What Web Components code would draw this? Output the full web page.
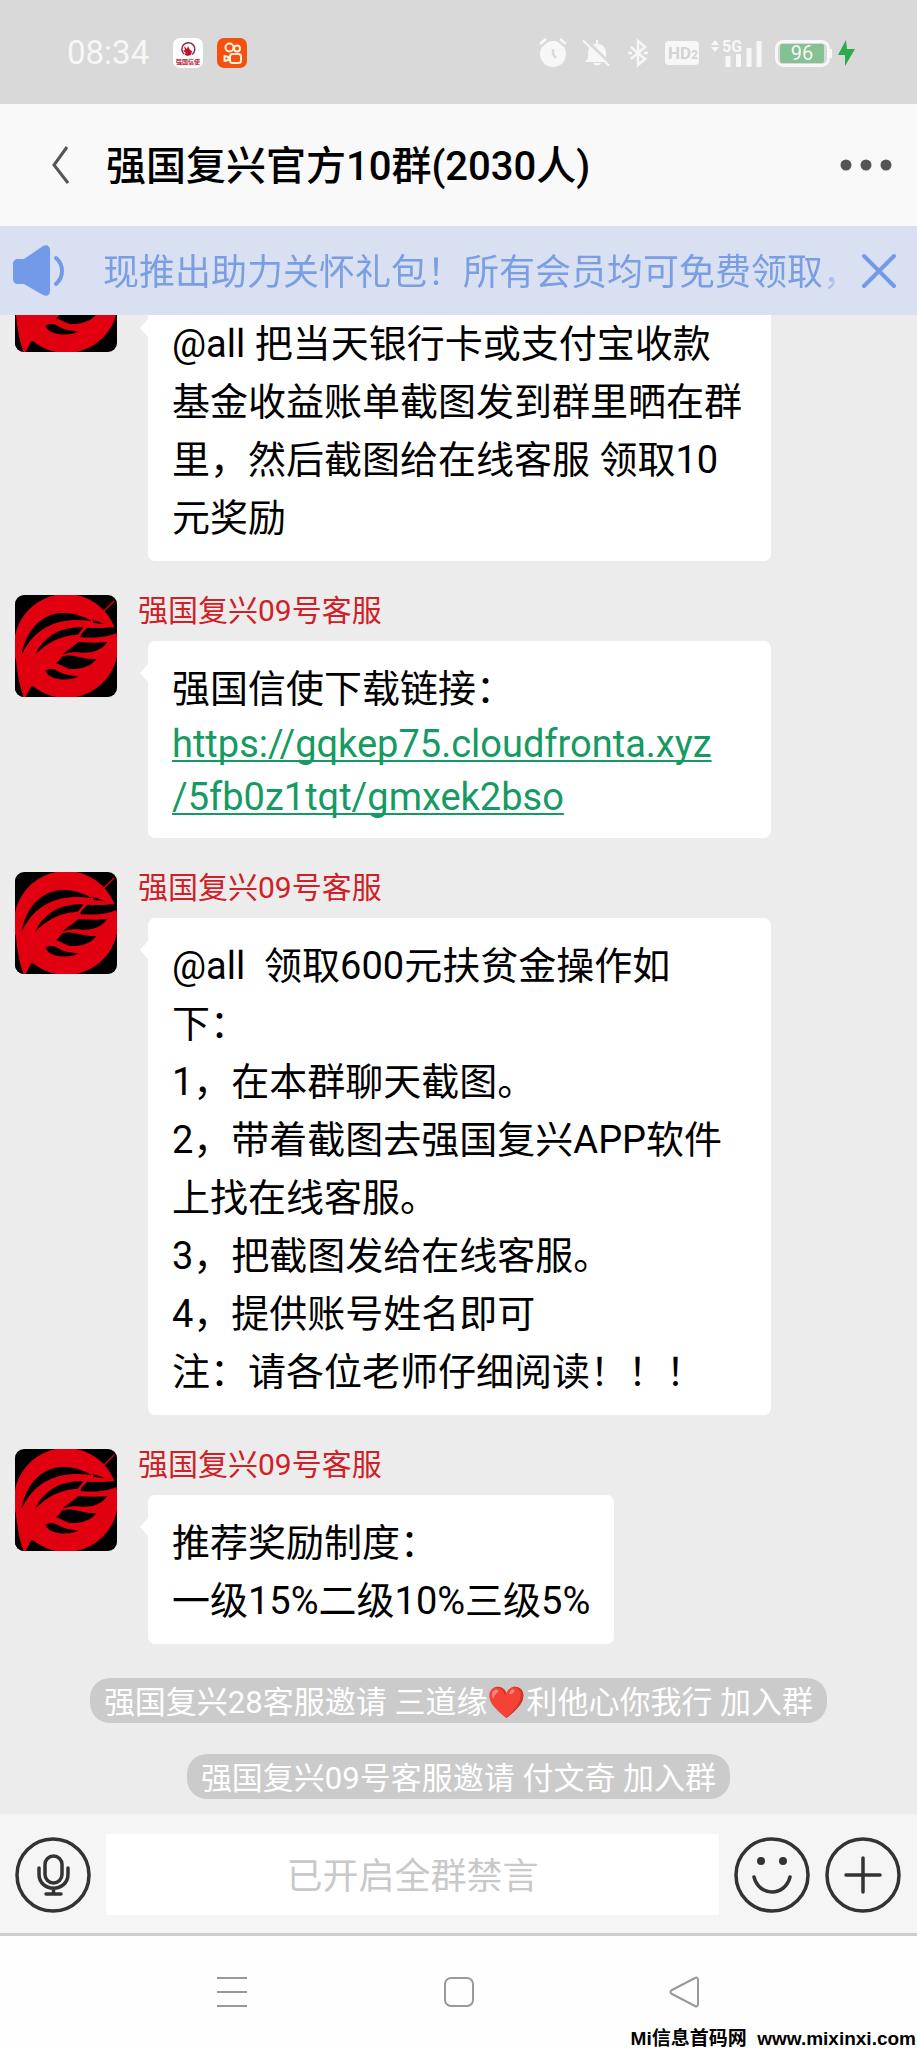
<!DOCTYPE html>
<html lang="zh-CN">
<head>
<meta charset="UTF-8">
<meta name="viewport" content="width=device-width, initial-scale=1.0">
<title>强国复兴官方10群</title>
<style>
  body {
    margin: 0;
    font-family: Roboto, "Noto Sans CJK SC", sans-serif;
  }
</style>
</head>
<body>
<chat-app>
  <status-bar slot="top" time="08:34" battery="96"></status-bar>
  <chat-header slot="top">强国复兴官方10群(2030人)</chat-header>
  <notice-banner slot="top">现推出助力关怀礼包！所有会员均可免费领取，</notice-banner>

  <chat-message>@all 把当天银行卡或支付宝收款基金收益账单截图发到群里晒在群里，然后截图给在线客服 领取10元奖励</chat-message>
  <chat-message name="强国复兴09号客服">强国信使下载链接：<a href="https://gqkep75.cloudfronta.xyz/5fb0z1tqt/gmxek2bso">https://gqkep75.cloudfronta.xyz<wbr>/5fb0z1tqt/gmxek2bso</a></chat-message>
  <chat-message name="强国复兴09号客服">@all&nbsp; 领取600元扶贫金操作如<br>下：<br>1，在本群聊天截图。<br>2，带着截图去强国复兴APP软件上找在线客服。<br>3，把截图发给在线客服。<br>4，提供账号姓名即可<br>注：请各位老师仔细阅读！！！</chat-message>
  <chat-message name="强国复兴09号客服">推荐奖励制度：<br>一级15%二级10%三级5%</chat-message>
  <join-notice>强国复兴28客服邀请 三道缘❤️利他心你我行 加入群</join-notice>
  <join-notice>强国复兴09号客服邀请 付文奇 加入群</join-notice>

  <chat-input slot="bottom" placeholder="已开启全群禁言"></chat-input>
  <nav-bar slot="bottom">Mi信息首码网&nbsp; www.mixinxi.com</nav-bar>
</chat-app>

<script>
class ChatApp extends HTMLElement {
  constructor() {
    super();
    this.attachShadow({ mode: 'open' });
  }

  connectedCallback() {
    this.shadowRoot.innerHTML = `
      <style>
        :host {
          display: flex;
          flex-direction: column;
          height: 100vh;
          background: #ececec;
        }
        /* newest messages stay at the bottom, older ones go under the banner */
        main {
          flex: 1;
          min-height: 0;
          overflow: hidden;
          display: flex;
          flex-direction: column;
          justify-content: flex-end;
          padding-bottom: 15px;
        }
      </style>
      <slot name="top"></slot>
      <main><slot></slot></main>
      <slot name="bottom"></slot>
    `;
  }
}

class StatusBar extends HTMLElement {
  constructor() {
    super();
    this.attachShadow({ mode: 'open' });
  }

  connectedCallback() {
    const time = this.getAttribute('time');
    const battery = this.getAttribute('battery');
    this.shadowRoot.innerHTML = `
      <style>
        :host {
          display: flex;
          align-items: center;
          justify-content: space-between;
          flex: none;
          height: 104px;
          padding: 2px 62px 0 67px;
          box-sizing: border-box;
          background: #d9d9d9;
          color: #f7f7f7;
        }
        div {
          display: flex;
          align-items: center;
          gap: 12px;
        }
        .left { gap: 14px; }
        time {
          font-size: 33px;
          line-height: 36px;
          margin-right: 10px;
        }
        svg {
          display: block;
          overflow: visible;
        }
        text { font-family: Roboto, "Noto Sans CJK SC", sans-serif; }
      </style>
      <div class="left">
        <time>${time}</time>
        <svg width="30" height="30" viewBox="0 0 30 30">
          <rect width="30" height="30" rx="7" fill="#fff"/>
          <path d="M11 16A6.500 6.500 0 1 1 19 16.500" fill="none" stroke="#8d2a45" stroke-width="1.500"/>
          <path d="M11 8l3 3 1-3 2 4 2 1-1 4-4 1-3-2 2-1-3-2 2-1z" fill="#c8102e"/>
          <text x="15" y="26" font-size="6" font-weight="700" text-anchor="middle" fill="#b3132f">强国信使</text>
        </svg>
        <svg width="30" height="30" viewBox="0 0 30 30">
          <rect width="30" height="30" rx="7" fill="#f4500f"/>
          <g fill="none" stroke="#fff0dc" stroke-width="2">
            <circle cx="12.500" cy="9.500" r="4"/>
            <circle cx="20" cy="10.500" r="3"/>
            <rect x="13" y="16" width="11" height="9" rx="2.500"/>
            <path d="M7.500 18v5l4-1v-3z" stroke-linejoin="round"/>
          </g>
        </svg>
      </div>
      <div>
        <svg width="32" height="28" viewBox="0 0 32 28">
          <circle cx="14" cy="15" r="13" fill="#f7f7f7"/>
          <path d="M1 6l6-5M27 6l-6-5" stroke="#d9d9d9" stroke-width="6"/>
          <path d="M1 5l6-5M27 5l-6-5" stroke="#f7f7f7" stroke-width="2.500"/>
          <path d="M14 10v5l3 4" fill="none" stroke="#d9d9d9" stroke-width="2.500"/>
        </svg>
        <svg width="32" height="28" viewBox="0 0 32 28">
          <path d="M2 23c3-3 3-4 3-9 0-6 4-9 8-9V1h2v4c4 0 8 3 8 9 0 5 0 6 3 9z" fill="#f7f7f7"/>
          <path d="M10 24h8c-1 3-7 3-8 0z" fill="#f7f7f7"/>
          <path d="M2 0l27 26" stroke="#d9d9d9" stroke-width="3"/>
          <path d="M0 1.500l26 25" stroke="#f7f7f7" stroke-width="2"/>
        </svg>
        <svg width="26" height="28" viewBox="0 0 26 28">
          <path d="M4 8l14 12-7 6V2l7 6L4 20" fill="none" stroke="#f7f7f7" stroke-width="2.500"/>
          <path d="M1 14h4M17 14h4" stroke="#f7f7f7" stroke-width="2.500"/>
        </svg>
        <svg width="34" height="24" viewBox="0 0 34 24">
          <rect width="34" height="24" rx="4" fill="#f7f7f7"/>
          <text x="3" y="18" font-size="17" font-weight="700" fill="#d3d3d3">HD<tspan font-size="12">2</tspan></text>
        </svg>
        <svg width="52" height="28" viewBox="0 0 52 28">
          <path d="M0 6l4-5 4 5zM0 8h8l-4 5z" fill="#f7f7f7"/>
          <text x="11" y="13" font-size="16" font-weight="700" fill="#f7f7f7">5G</text>
          <path d="M17 17v11M27.500 15v13M38 9v19M48 2v26" stroke="#f7f7f7" stroke-width="5"/>
        </svg>
        <svg width="80" height="28" viewBox="0 0 80 28">
          <rect x="1.500" y="2.500" width="52" height="24" rx="7" fill="#d9d9d9" stroke="#f7f7f7" stroke-width="3"/>
          <rect x="5" y="5" width="44" height="19" rx="2" fill="#85c193"/>
          <path d="M56 10v9" stroke="#f7f7f7" stroke-width="2"/>
          <text x="27" y="21" font-size="20" text-anchor="middle" fill="#f7f7f7">${battery}</text>
          <path d="M71 1l-8 15h7v11l10-17h-8z" fill="#2bab4b"/>
        </svg>
      </div>
    `;
  }
}

class ChatHeader extends HTMLElement {
  constructor() {
    super();
    this.attachShadow({ mode: 'open' });
  }

  connectedCallback() {
    this.shadowRoot.innerHTML = `
      <style>
        :host {
          display: flex;
          align-items: center;
          flex: none;
          height: 122px;
          padding: 0 25px;
          box-sizing: border-box;
          background: #f9f9f9;
          color: #000;
        }
        h1 {
          flex: 1;
          margin: 0;
          padding-top: 4px;
          font-size: 40px;
          font-weight: 500;
          line-height: 58px;
        }
        button {
          border: 0;
          padding: 0;
          background: none;
        }
        .back { padding: 0 37px 0 27px; }
        svg { display: block; }
      </style>
      <button class="back" type="button" aria-label="返回">
        <svg width="17" height="38" viewBox="0 0 17 38"><path d="M15 1L2 19l14 18" fill="none" stroke="#555" stroke-width="3"/></svg>
      </button>
      <h1><slot></slot></h1>
      <button type="button" aria-label="更多">
        <svg width="52" height="12" viewBox="0 0 52 12" fill="#555"><circle cx="6" cy="6" r="5.500"/><circle cx="26" cy="6" r="5.500"/><circle cx="46" cy="6" r="5.500"/></svg>
      </button>
    `;
  }
}

class NoticeBanner extends HTMLElement {
  constructor() {
    super();
    this.attachShadow({ mode: 'open' });
  }

  connectedCallback() {
    this.shadowRoot.innerHTML = `
      <style>
        :host {
          display: flex;
          align-items: center;
          flex: none;
          height: 89px;
          padding: 0 20px 0 12px;
          box-sizing: border-box;
          background: #d9e0f2;
          color: #7a9ee2;
        }
        p {
          flex: 1;
          min-width: 0;
          margin: 0 20px 0 38px;
          padding-top: 4px;
          overflow: hidden;
          white-space: nowrap;
          font-size: 36px;
          line-height: 50px;
          -webkit-mask-image: linear-gradient(to left, transparent, #000 20px);
          mask-image: linear-gradient(to left, transparent, #000 20px);
        }
        button {
          border: 0;
          padding: 0;
          background: none;
        }
        svg { display: block; }
      </style>
      <svg width="53" height="52" viewBox="0 0 53 52">
        <path d="M6 14h6L31 1c4-2 7 0 7 4v41c0 4-3 6-7 4L12 39H6c-3 0-5-2-5-5V19c0-3 2-5 5-5z" fill="#7399e9"/>
        <path d="M44 13c8 7 8 19 0 26" fill="none" stroke="#7399e9" stroke-width="4" stroke-linecap="round"/>
      </svg>
      <p><slot></slot></p>
      <button type="button" aria-label="关闭">
        <svg width="36" height="36" viewBox="0 0 36 36"><path d="M3 3l30 30M33 3L3 33" stroke="#7399e9" stroke-width="4" stroke-linecap="round"/></svg>
      </button>
    `;
  }
}

class ChatMessage extends HTMLElement {
  constructor() {
    super();
    this.attachShadow({ mode: 'open' });
  }

  connectedCallback() {
    const name = this.getAttribute('name') || '';
    this.shadowRoot.innerHTML = `
      <style>
        :host {
          display: flex;
          align-items: flex-start;
          flex: none;
          margin-bottom: 34px;
          padding: 0 146px 0 15px;
          color: #000;
        }
        .avatar {
          flex: none;
          width: 102px;
          height: 102px;
          border-radius: 9px;
        }
        .body {
          display: flex;
          flex-direction: column;
          align-items: flex-start;
          min-width: 0;
          padding-left: 21px;
        }
        .name {
          height: 46px;
          color: #d02027;
          font-size: 30px;
          line-height: 31px;
        }
        .bubble {
          position: relative;
          margin-left: 10px;
          padding: 19px 24px 14px;
          border-radius: 7px;
          background: #fff;
          font-size: 38px;
          line-height: 58px;
        }
        .bubble::before {
          content: "";
          position: absolute;
          top: 23px;
          left: -8px;
          width: 8px;
          height: 18px;
          background: #fff;
          clip-path: polygon(100% 0, 0 50%, 100% 100%);
        }
        ::slotted(a) {
          display: block;
          color: #169a63;
          line-height: 53px;
          text-decoration-thickness: 2px;
          text-underline-offset: 3px;
          text-decoration-skip-ink: none;
        }
      </style>
      <svg class="avatar" viewBox="46 43 306 306" aria-hidden="true">
        <rect x="46" y="43" width="306" height="306" fill="#000"/>
        <circle cx="199" cy="196" r="156" fill="#e0000f"/>
        <path d="M46 200C50 260 56 310 72 349H82L96 318 140 300 80 180z" fill="#e0000f"/>
        <path d="M46 240C52 280 58 320 70 349H46zM78 349L95 317 145 349z" fill="#000"/>
        <g fill="#000">
          <path d="M66 222C76 160 118 98 190 97c34 0 60 10 86 24-90-12-166 10-210 101z"/>
          <path d="M278 116l36 14-32-3z"/>
          <path d="M108 220c22-50 76-85 144-80l-18 22c-60 4-92 26-126 58z"/>
          <path d="M264 141c30 2 60 0 88-3v18c-30 14-66 16-106 14-10-2 6-20 18-29z"/>
          <path d="M236 184c30 2 60 3 86 0-14 26-50 34-76 32-20-2-34-2-58 6 16-14 34-24 48-38z"/>
          <path d="M186 228c34-12 60 10 104 7-14 22-50 32-76 30-16-2-28-12-46-18 8-2 12-10 18-19z"/>
          <path d="M138 270c22-14 38 4 56 10 14 5 28 5 42 7-14 12-86 18-98-17z"/>
        </g>
        <path d="M282 122l62-62" fill="none" stroke="#e0000f" stroke-width="4"/>
      </svg>
      <div class="body">
        <div class="name">${name}</div>
        <div class="bubble"><slot></slot></div>
      </div>
    `;
  }
}

class JoinNotice extends HTMLElement {
  constructor() {
    super();
    this.attachShadow({ mode: 'open' });
  }

  connectedCallback() {
    this.shadowRoot.innerHTML = `
      <style>
        :host {
          display: block;
          flex: none;
          align-self: center;
          padding: 4px 14px 0;
          border-radius: 20px;
          background: #cbcbcb;
          color: #fff;
          font-size: 31px;
          line-height: 41px;
        }
        :host(:not(:last-of-type)) { margin-bottom: 31px; }
      </style>
      <slot></slot>
    `;
  }
}

class ChatInput extends HTMLElement {
  constructor() {
    super();
    this.attachShadow({ mode: 'open' });
  }

  connectedCallback() {
    const placeholder = this.getAttribute('placeholder');
    this.shadowRoot.innerHTML = `
      <style>
        :host {
          display: flex;
          align-items: center;
          flex: none;
          gap: 15px;
          height: 122px;
          padding: 2px 16px 0 15px;
          box-sizing: border-box;
          border-bottom: 3px solid #cdcdcd;
          background: #f5f5f5;
        }
        input {
          flex: 1;
          min-width: 0;
          height: 81px;
          padding: 4px 0 0;
          box-sizing: border-box;
          border: 0;
          border-radius: 2px;
          background: #fff;
          font: inherit;
          font-size: 36px;
          text-align: center;
        }
        input::placeholder {
          color: #c9c9c9;
          opacity: 1;
        }
        button {
          flex: none;
          border: 0;
          padding: 0;
          background: none;
        }
        svg {
          display: block;
          fill: none;
          stroke: #333;
          stroke-width: 3.500;
          stroke-linecap: round;
        }
      </style>
      <button type="button" aria-label="语音">
        <svg width="76" height="76" viewBox="0 0 76 76">
          <circle cx="38" cy="38" r="36"/>
          <rect x="30" y="19" width="17" height="27" rx="8.500"/>
          <path d="M24 31v6c0 19 29 19 29 0v-6M38.500 51v6M31 57h15"/>
        </svg>
      </button>
      <input type="text" aria-label="消息" placeholder="${placeholder}" disabled>
      <button type="button" aria-label="表情">
        <svg width="76" height="76" viewBox="0 0 76 76">
          <circle cx="38" cy="38" r="36"/>
          <circle cx="27" cy="24" r="4" fill="#333" stroke="none"/>
          <circle cx="49" cy="24" r="4" fill="#333" stroke="none"/>
          <path d="M20 40c5 20 31 20 36 0"/>
        </svg>
      </button>
      <button type="button" aria-label="更多功能">
        <svg width="76" height="76" viewBox="0 0 76 76">
          <circle cx="38" cy="38" r="36"/>
          <path d="M38 21v34M21 38h34"/>
        </svg>
      </button>
    `;
  }
}

class NavBar extends HTMLElement {
  constructor() {
    super();
    this.attachShadow({ mode: 'open' });
  }

  connectedCallback() {
    this.shadowRoot.innerHTML = `
      <style>
        :host {
          position: relative;
          display: flex;
          align-items: center;
          flex: none;
          height: 112px;
          padding: 0 13%;
          box-sizing: border-box;
          background: #fefefe;
        }
        button {
          flex: 1;
          display: flex;
          justify-content: center;
          border: 0;
          padding: 0;
          background: none;
        }
        svg {
          display: block;
          fill: none;
          stroke: #999;
          stroke-width: 2;
        }
        /* site mark lies over the corner of the bar */
        small {
          position: absolute;
          right: 1px;
          bottom: 0;
          color: #000;
          font-family: "Liberation Sans", "Noto Sans CJK SC", sans-serif;
          font-size: 19px;
          font-weight: 700;
          line-height: 18px;
          white-space: nowrap;
        }
      </style>
      <button type="button" aria-label="最近任务">
        <svg width="32" height="32" viewBox="0 0 32 32"><path d="M1 2h30M1 16h30M1 30h30"/></svg>
      </button>
      <button type="button" aria-label="主屏幕">
        <svg width="32" height="32" viewBox="0 0 32 32"><rect x="2" y="2" width="28" height="28" rx="6"/></svg>
      </button>
      <button type="button" aria-label="返回">
        <svg width="32" height="32" viewBox="0 0 32 32"><path d="M3 14L26 2c2-1 3 0 3 2v24c0 2-1 3-3 2L3 18c-2-1-2-3 0-4z"/></svg>
      </button>
      <small><slot></slot></small>
    `;
  }
}

customElements.define('chat-app', ChatApp);
customElements.define('status-bar', StatusBar);
customElements.define('chat-header', ChatHeader);
customElements.define('notice-banner', NoticeBanner);
customElements.define('chat-message', ChatMessage);
customElements.define('join-notice', JoinNotice);
customElements.define('chat-input', ChatInput);
customElements.define('nav-bar', NavBar);
</script>
</body>
</html>
